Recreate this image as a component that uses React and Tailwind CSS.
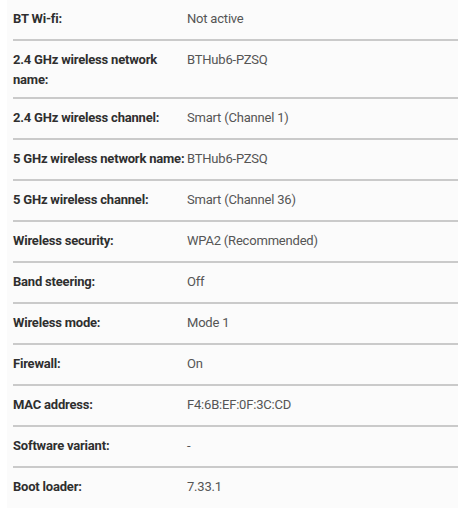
const rows = [
  ["BT Wi-fi:", "Not active"],
  ["2.4 GHz wireless network name:", "BTHub6-PZSQ"],
  ["2.4 GHz wireless channel:", "Smart (Channel 1)"],
  ["5 GHz wireless network name:", "BTHub6-PZSQ"],
  ["5 GHz wireless channel:", "Smart (Channel 36)"],
  ["Wireless security:", "WPA2 (Recommended)"],
  ["Band steering:", "Off"],
  ["Wireless mode:", "Mode 1"],
  ["Firewall:", "On"],
  ["MAC address:", "F4:6B:EF:0F:3C:CD"],
  ["Software variant:", "-"],
  ["Boot loader:", "7.33.1"],
];

export default function App() {
  return (
    <div className="min-h-screen bg-white pl-[7px] font-['Roboto',sans-serif] text-[13px] leading-[20px] tracking-[-0.2px]">
      <div className="min-h-screen bg-[#fbfbfb] pl-[6px]">
        {rows.map(([label, value], i) => (
          <div
            key={label}
            className={
              i === rows.length - 1
                ? "grid grid-cols-[174px_1fr] min-h-[41px] pt-[9px] pb-[7px]"
                : "grid grid-cols-[174px_1fr] min-h-[41px] pt-[9px] pb-[7px] border-b-2 border-[#cacaca]"
            }
          >
            <div className="font-bold text-[#2f2f2f]">{label}</div>
            <div className="text-[#555555]">{value}</div>
          </div>
        ))}
      </div>
    </div>
  );
}
